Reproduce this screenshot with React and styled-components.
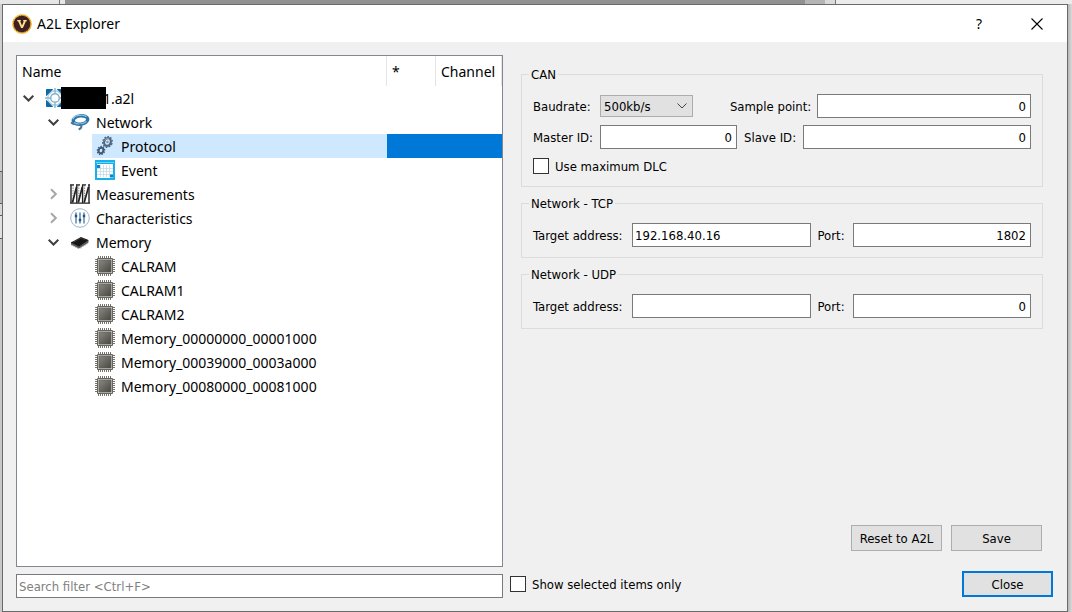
import { useState } from "react";
import styled, { createGlobalStyle } from "styled-components";

const treeFont = `"Noto Sans", "Open Sans", sans-serif`;
const formFont = `"DejaVu Sans Condensed", "DejaVu Sans", sans-serif`;

const GlobalStyle = createGlobalStyle`
    * {
        box-sizing: border-box;
    }
    body {
        margin: 0;
        color: #000;
        background: #f0f0f0;
    }
    button, input, select {
        font: inherit;
        color: inherit;
        margin: 0;
        border-radius: 0;
    }
`

const Desktop = styled.div`
    min-height: 100vh;
    display: grid;
    grid-template-columns: 2px minmax(0, 1fr) 4px;
    grid-template-rows: 4px 1fr;
`

const TopEdge = styled.div`
    grid-column: 1 / -1;
    display: flex;
    background: #ececec;
`

const EdgePart = styled.div`
    background: ${(p) => p.$color};
    flex: ${(p) => p.$flex};
`

const LeftEdge = styled.div`
    background: linear-gradient(#cfcfcf 0 167px, #5a5a5a 167px 168px, #b4b4b4 168px 199px, #5a5a5a 199px 200px, #d6d6d6 200px 211px, #5a5a5a 211px 212px, #e0e0e0 212px 234px, #5a5a5a 234px 235px, #c8c8c8 235px);
`

const RightEdge = styled.div`
    background: linear-gradient(90deg, #b8b8b8, #dadada);
`

const Window = styled.div`
    display: flex;
    flex-direction: column;
    border: 1px solid #6a6a6a;
    background: #f0f0f0;
`

const TitleBar = styled.div`
    display: flex;
    align-items: center;
    height: 37px;
    padding: 0 1px 0 9px;
    background: #fff;
    font: 14px ${treeFont};
`

const Title = styled.div`
    flex: 1;
    padding-left: 5px;
`

const CaptionButton = styled.button`
    display: flex;
    align-items: center;
    justify-content: center;
    width: 58px;
    height: 36px;
    padding: 0;
    border: none;
    background: none;
`

const Content = styled.div`
    flex: 1;
    display: grid;
    grid-template-columns: minmax(0, 487fr) minmax(0, 543fr);
    grid-template-rows: 1fr 27px;
    gap: 4px 7px;
    padding: 13px 14px 13px 13px;
    font: 13px ${formFont};
`

const TreeBox = styled.div`
    border: 1px solid #828790;
    background: #fff;
`

const Tree = styled.table`
    width: 100%;
    table-layout: fixed;
    border-collapse: separate;
    border-spacing: 0;
    font: 14px ${treeFont};
`

const HeadCell = styled.th`
    width: ${(p) => p.$width};
    height: 30px;
    padding: 0 5px;
    border-right: 1px solid #e5e5e5;
    font-weight: 400;
    text-align: left;
`

const Cell = styled.td`
    height: 24px;
    padding: 0;
    background: ${(p) => (p.$selected ? '#0078d7' : 'none')};
`

const NodeLine = styled.div`
    display: flex;
    align-items: center;
    gap: 3px;
    padding-left: ${(p) => p.$level * 25}px;
`

const Toggle = styled.span`
    display: flex;
    justify-content: center;
    width: 22px;
`

const NodeItem = styled.span`
    flex: 1;
    display: flex;
    align-items: center;
    gap: 6px;
    height: 24px;
    padding-left: 3px;
    white-space: nowrap;
    background: ${(p) => (p.$selected ? '#cde8ff' : 'none')};
`

const NodeName = styled.span`
    display: flex;
    align-items: center;
`

/* blanks out the first part of the file name, over the icon's edge */
const Redacted = styled.span`
    position: relative;
    width: 45px;
    height: 22px;
    margin: 0 -3px 0 -10px;
    background: #000;
`

const Panel = styled.div`
    display: flex;
    flex-direction: column;
    gap: 9px;
    padding: 12px 10px 16px 11px;
`

const Group = styled.fieldset`
    display: flex;
    flex-direction: column;
    gap: 7px;
    min-width: 0;
    margin: 0;
    padding: 12px 11px 10px;
    border: 1px solid #dcdcdc;
`

const Legend = styled.legend`
    height: 15px;
    margin-left: -4px;
    padding: 0 2px;
    line-height: 15px;
`

const Row = styled.div`
    display: flex;
    align-items: center;
    gap: 7px;
`

const Label = styled.label`
    flex: none;
    width: ${(p) => p.$width}px;
    margin-left: ${(p) => (p.$push ? 'auto' : '0')};
    white-space: nowrap;
`

const TextBox = styled.input`
    flex: ${(p) => p.$flex || '1 1 0'};
    width: ${(p) => p.$width || 'auto'};
    min-width: 0;
    height: 24px;
    padding: 0 4px 0 2px;
    border: 1px solid #7a7a7a;
    background: #fff;
    outline: none;
    text-align: ${(p) => (p.$number ? 'right' : 'left')};
    &::placeholder {
        color: #808080;
        opacity: 1;
    }
`

const SelectWrap = styled.div`
    position: relative;
    width: 93px;
    svg {
        position: absolute;
        right: 6px;
        top: 8px;
        pointer-events: none;
    }
`

const Select = styled.select`
    appearance: none;
    display: block;
    width: 100%;
    height: 22px;
    padding: 0 3px;
    border: 1px solid #adadad;
    background: #e1e1e1;
`

const CheckLabel = styled.label`
    display: flex;
    align-items: center;
    gap: 6px;
    height: 20px;
`

const CheckBox = styled.input`
    appearance: none;
    width: 16px;
    height: 16px;
    border: 1px solid #333;
    background: #fff;
    &:checked {
        box-shadow: inset 0 0 0 3px #fff;
        background: #333;
    }
`

const Actions = styled.div`
    display: flex;
    justify-content: flex-end;
    gap: 9px;
    margin-top: auto;
    padding-right: 1px;
`

const Button = styled.button`
    width: 91px;
    height: 26px;
    padding: 0;
    border: ${(p) => (p.$primary ? '2px solid #0078d7' : '1px solid #adadad')};
    background: #e1e1e1;
`

const SearchLine = styled.div`
    display: flex;
    align-items: flex-end;
`

const Footer = styled.div`
    display: flex;
    align-items: flex-start;
    justify-content: space-between;
    ${CheckLabel} {
        height: 26px;
    }
`

const AppIcon = () => (
    <svg width="20" height="20" viewBox="0 0 20 20">
        <circle cx="10" cy="10" r="9" fill="#3e2023" stroke="#f0ac1c" strokeWidth="1.5" strokeDasharray="2.2 .4" />
        <path d="M5.200 6h3.600v1.200h-.6L10 11.500l1.800-4.300h-.6V6h3.600v1.200h-.9L10.900 14H9.100L6.100 7.200h-.9z" fill="#ffe08a" />
    </svg>
)

const DownIcon = () => (
    <svg width="12" height="8" viewBox="0 0 12 8">
        <path d="M1.700 1.700 6.500 6.500l4.800-4.800" fill="none" stroke="#404040" strokeWidth="2" />
    </svg>
)

const RightIcon = () => (
    <svg width="8" height="12" viewBox="0 0 8 12">
        <path d="M2 1.200 6.800 6 2 10.800" fill="none" stroke="#a6a6a6" strokeWidth="2" />
    </svg>
)

const FileIcon = () => (
    <svg width="20" height="20" viewBox="0 0 20 20">
        <path d="M1.500 1.500h6l-6 6zM18.500 1.500v6l-6-6zM1.500 18.500v-6l6 6zM18.500 18.500h-6l6-6z" fill="#0d69a8" stroke="#0d69a8" />
        <path d="M7.200 3h5.600L17 7.200v5.600L12.800 17H7.200L3 12.800V7.200z" fill="#fff" stroke="#a9cadc" strokeWidth="1.300" />
        <circle cx="10" cy="10" r="4.300" fill="#fff" stroke="#7fb0cd" strokeWidth="1.500" />
        <path d="M10 0v5.500M10 14.500V20M0 10h5.500M14.500 10H20" stroke="#8db9d2" strokeWidth="1.500" />
    </svg>
)

const NetworkIcon = () => (
    <svg width="20" height="20" viewBox="0 0 20 20" fill="none">
        <ellipse cx="10.500" cy="8" rx="7.300" ry="4.200" stroke="#2b74a8" strokeWidth="3.400" transform="rotate(-8 10.500 8)" />
        <path d="M2.800 7.300C4 3.500 12 1.700 16.500 4.600" stroke="#8cc6ea" strokeWidth="1.400" />
        <path d="M4 10.500c3 2.300 9 2 12.500-1" stroke="#8cc6ea" strokeWidth="1.200" />
        <path d="M1 10.500 4 12.500M9.500 12.800c3 .4 2.500 3.200-.8 4.700" stroke="#4a7594" strokeWidth="2" />
    </svg>
)

const GearsIcon = () => (
    <svg width="20" height="20" viewBox="0 0 20 20" fill="none">
        <g transform="rotate(20 12.500 6)">
            <ellipse cx="12.500" cy="6" rx="3.300" ry="3.900" stroke="#51677e" strokeWidth="2.200" />
            <ellipse cx="12.500" cy="6" rx="4.700" ry="5.300" stroke="#51677e" strokeWidth="1.400" strokeDasharray="1.600 1.400" />
        </g>
        <circle cx="12.500" cy="6" r="1.200" fill="#7f93a8" />
        <g transform="rotate(20 6 14.500)">
            <ellipse cx="6" cy="14.500" rx="2.300" ry="2.800" stroke="#405a75" strokeWidth="2" />
            <ellipse cx="6" cy="14.500" rx="3.600" ry="4.100" stroke="#405a75" strokeWidth="1.300" strokeDasharray="1.400 1.200" />
        </g>
        <path d="M9.800 4.500c.8-1.600 2.700-2.200 4.200-1.500" stroke="#a3b1bf" />
    </svg>
)

const EventIcon = () => (
    <svg width="20" height="20" viewBox="0 0 20 20">
        <path d="M0 0h20v20H0z" fill="#17b0ee" />
        <path d="M2 4h16v14H2z" fill="#fff" />
        <path d="M1 2.500h18" stroke="#6fd4f8" />
        <path d="M5.500 5v12M8.500 5v12M11.500 5v12M14.500 5v12M2 8.500h16M2 11.500h16M2 14.500h16" stroke="#c3dbe9" strokeWidth=".8" />
        <path d="M2 5h3v3H2zM15 14.500h3v3h-3z" fill="#1683c4" />
    </svg>
)

const MeasureIcon = () => (
    <svg width="20" height="20" viewBox="0 0 20 20" fill="none" stroke="#222">
        <path d="M1 1v18M6.800 1v18M12.600 1v18M19 1v18" strokeWidth="1.400" />
        <path d="M3 1v18M8.800 1v18M14.600 1v18" stroke="#888" strokeDasharray="1.500 1" />
        <path d="M2.500 18.500 6.500 3M8.300 18.500l4-15.500M14.200 18.500l4.300-15.500" strokeWidth="1.700" />
        <path d="M0 .8h4M6 .8h4M12 .8h4M18 .8h2M0 19.200h20" strokeWidth="1.200" />
    </svg>
)

const SlidersIcon = () => (
    <svg width="20" height="20" viewBox="0 0 20 20" fill="none">
        <circle cx="10" cy="10" r="9.300" fill="#fff" stroke="#9bb4ca" />
        <path d="M6 4.500v11M10 4.500v11M14 4.500v11" stroke="#326696" strokeWidth="1.200" />
        <path d="M4.800 8h2.400M8.800 12h2.400M12.800 8h2.400" stroke="#1d528a" strokeWidth="2.600" />
    </svg>
)

const MemoryIcon = () => (
    <svg width="20" height="20" viewBox="0 0 20 20">
        <path d="M1 10v2.500l8 4 9.500-6V8z" fill="#555" />
        <path d="M1 10.500 11 5l7.500 3L9 14.500z" fill="#151515" />
        <path d="M2 12v2M4 13v2M6 14v2M8 15v2M11 14.500v2M13 13v2M15 12v2M17 10.500v2" stroke="#777" strokeWidth=".7" />
        <path d="M3 10.300 11 6l4 1.600" fill="none" stroke="#4c4c4c" strokeWidth=".7" />
    </svg>
)

const ChipIcon = () => (
    <svg width="20" height="20" viewBox="0 0 20 20">
        <defs>
            <linearGradient id="chip" x1="0" y1="0" x2="1" y2="1">
                <stop offset="0" stopColor="#8a8a82" />
                <stop offset="1" stopColor="#47473f" />
            </linearGradient>
        </defs>
        <path d="M3.500 0v20M5.500 0v20M7.500 0v20M9.500 0v20M11.500 0v20M13.500 0v20M15.500 0v20M0 3.500h20M0 5.500h20M0 7.500h20M0 9.500h20M0 11.500h20M0 13.500h20M0 15.500h20" stroke="#77736f" />
        <path d="M2.500 2.500h15v15h-15z" fill="#c9c8c4" stroke="#67655e" />
        <path d="M4 4h12v12H4z" fill="url(#chip)" stroke="#5b5952" strokeWidth=".6" />
    </svg>
)

const nodes = [
    { name: '1.a2l', level: 0, Icon: FileIcon, open: true, redacted: true },
    { name: 'Network', level: 1, Icon: NetworkIcon, open: true },
    { name: 'Protocol', level: 2, Icon: GearsIcon },
    { name: 'Event', level: 2, Icon: EventIcon },
    { name: 'Measurements', level: 1, Icon: MeasureIcon, open: false },
    { name: 'Characteristics', level: 1, Icon: SlidersIcon, open: false },
    { name: 'Memory', level: 1, Icon: MemoryIcon, open: true },
    { name: 'CALRAM', level: 2, Icon: ChipIcon },
    { name: 'CALRAM1', level: 2, Icon: ChipIcon },
    { name: 'CALRAM2', level: 2, Icon: ChipIcon },
    { name: 'Memory_00000000_00001000', level: 2, Icon: ChipIcon },
    { name: 'Memory_00039000_0003a000', level: 2, Icon: ChipIcon },
    { name: 'Memory_00080000_00081000', level: 2, Icon: ChipIcon },
]

const NodeRow = ({ node, selected, onSelect }) => (
    <tr onClick={onSelect}>
        <Cell>
            <NodeLine $level={node.level}>
                <Toggle>
                    {node.open === true && <DownIcon />}
                    {node.open === false && <RightIcon />}
                </Toggle>
                <NodeItem $selected={selected}>
                    <node.Icon />
                    <NodeName>{node.redacted && <Redacted />}{node.name}</NodeName>
                </NodeItem>
            </NodeLine>
        </Cell>
        <Cell $selected={selected} />
        <Cell $selected={selected} />
    </tr>
)

const NetworkGroup = ({ id, title, address, port }) => (
    <Group>
        <Legend>{title}</Legend>
        <Row>
            <Label htmlFor={id + '-address'} $width={92}>Target address:</Label>
            <TextBox id={id + '-address'} defaultValue={address} />
            <Label htmlFor={id + '-port'} $width={28}>Port:</Label>
            <TextBox id={id + '-port'} defaultValue={port} $number />
        </Row>
    </Group>
)

const App = () => {
    const [selected, setSelected] = useState('Protocol');

    return (
        <Desktop>
            <GlobalStyle />
            <TopEdge>
                <EdgePart $color="#e6e6e6" $flex="0 0 59px" />
                <EdgePart $color="#777" $flex="0 0 1px" />
                <EdgePart $color="#e6e6e6" $flex="0 0 5px" />
                <EdgePart $color="#919191" $flex="1" />
                <EdgePart $color="#b5b5b5" $flex="0 0 20px" />
                <EdgePart $color="#dadada" $flex="0 0 10px" />
                <EdgePart $color="#777" $flex="0 0 1px" />
                <EdgePart $color="#ececec" $flex="0 0 236px" />
            </TopEdge>
            <LeftEdge />
            <Window>
                <TitleBar>
                    <AppIcon />
                    <Title>A2L Explorer</Title>
                    <CaptionButton aria-label="Help">?</CaptionButton>
                    <CaptionButton aria-label="Close window">
                        <svg width="12" height="12" viewBox="0 0 12 12">
                            <path d="M.5.5l11 11M11.500.5l-11 11" stroke="#000" strokeWidth="1.100" />
                        </svg>
                    </CaptionButton>
                </TitleBar>
                <Content>
                    <TreeBox>
                        <Tree>
                            <thead>
                                <tr>
                                    <HeadCell>Name</HeadCell>
                                    <HeadCell $width="49px">*</HeadCell>
                                    <HeadCell $width="66px">Channel</HeadCell>
                                </tr>
                            </thead>
                            <tbody>
                                {nodes.map((node) => (
                                    <NodeRow
                                        key={node.name}
                                        node={node}
                                        selected={node.name === selected}
                                        onSelect={() => setSelected(node.name)}
                                    />
                                ))}
                            </tbody>
                        </Tree>
                    </TreeBox>
                    <Panel>
                        <Group>
                            <Legend>CAN</Legend>
                            <Row>
                                <Label htmlFor="baudrate" $width={60}>Baudrate:</Label>
                                <SelectWrap>
                                    <Select id="baudrate" defaultValue="500kb/s">
                                        <option>250kb/s</option>
                                        <option>500kb/s</option>
                                        <option>1000kb/s</option>
                                    </Select>
                                    <svg width="10" height="6" viewBox="0 0 10 6">
                                        <path d="M.5.5 5 5 9.500.5" fill="none" stroke="#444" />
                                    </svg>
                                </SelectWrap>
                                <Label htmlFor="sample-point" $width={80} $push>Sample point:</Label>
                                <TextBox id="sample-point" defaultValue="0" $flex="none" $width="43%" $number />
                            </Row>
                            <Row>
                                <Label htmlFor="master-id" $width={60}>Master ID:</Label>
                                <TextBox id="master-id" defaultValue="0" $flex="137 1 137px" $number />
                                <Label htmlFor="slave-id" $width={52}>Slave ID:</Label>
                                <TextBox id="slave-id" defaultValue="0" $flex="228 1 228px" $number />
                            </Row>
                            <CheckLabel>
                                <CheckBox type="checkbox" />
                                Use maximum DLC
                            </CheckLabel>
                        </Group>
                        <NetworkGroup id="tcp" title="Network - TCP" address="192.168.40.16" port="1802" />
                        <NetworkGroup id="udp" title="Network - UDP" address="" port="0" />
                        <Actions>
                            <Button>Reset to A2L</Button>
                            <Button>Save</Button>
                        </Actions>
                    </Panel>
                    <SearchLine>
                        <TextBox placeholder="Search filter <Ctrl+F>" aria-label="Search filter" />
                    </SearchLine>
                    <Footer>
                        <CheckLabel>
                            <CheckBox type="checkbox" />
                            Show selected items only
                        </CheckLabel>
                        <Button $primary>Close</Button>
                    </Footer>
                </Content>
            </Window>
            <RightEdge />
        </Desktop>
    );
}

export default App;
